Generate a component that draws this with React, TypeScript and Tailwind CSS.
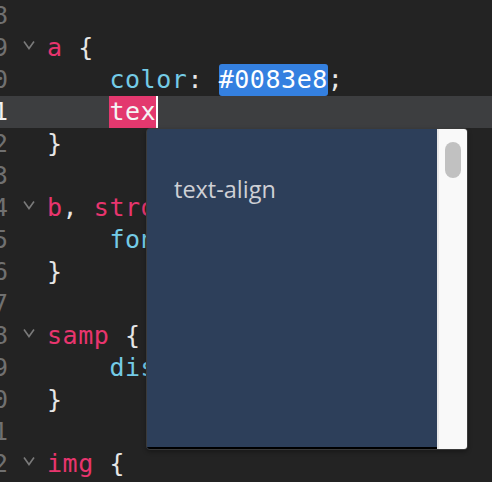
import React from "react";

type Tok = { t: string; c?: string };

const PINK = "text-[#e8356e]";
const CYAN = "text-[#74cbe6]";
const WHITE = "text-[#e6e6e6]";

const LINES: { n: number; fold?: boolean; indent?: boolean; toks: Tok[]; current?: boolean }[] = [
  { n: 18, toks: [] },
  { n: 19, fold: true, toks: [{ t: "a", c: PINK }, { t: " {", c: WHITE }] },
  { n: 20, indent: true, toks: [{ t: "color", c: CYAN }, { t: ": ", c: WHITE }] },
  { n: 21, indent: true, current: true, toks: [] },
  { n: 22, toks: [{ t: "}", c: WHITE }] },
  { n: 23, toks: [] },
  { n: 24, fold: true, toks: [{ t: "b", c: PINK }, { t: ", ", c: WHITE }, { t: "strong", c: PINK }, { t: " {", c: WHITE }] },
  { n: 25, indent: true, toks: [{ t: "font-weight", c: CYAN }, { t: ": bold;", c: WHITE }] },
  { n: 26, toks: [{ t: "}", c: WHITE }] },
  { n: 27, toks: [] },
  { n: 28, fold: true, toks: [{ t: "samp", c: PINK }, { t: " {", c: WHITE }] },
  { n: 29, indent: true, toks: [{ t: "display", c: CYAN }, { t: ": block;", c: WHITE }] },
  { n: 30, toks: [{ t: "}", c: WHITE }] },
  { n: 31, toks: [] },
  { n: 32, fold: true, toks: [{ t: "img", c: PINK }, { t: " {", c: WHITE }] },
];

function Chevron() {
  return (
    <svg width="12" height="10" viewBox="0 0 12 10" fill="none">
      <path d="M1 1.5 L6 8.5 L11 1.5" stroke="#7a7a7a" strokeWidth="1.6" />
    </svg>
  );
}

export default function App() {
  return (
    <div className="relative w-[492px] h-[482px] overflow-hidden bg-[#232323] font-['DejaVu_Sans_Mono',monospace] text-[25px] tracking-[0.55px]">
      <div className="flex flex-col">
        {LINES.map((line) => (
          <div
            key={line.n}
            className={`flex items-center h-[32px] ${line.current ? "bg-[#3d3e40]" : ""}`}
          >
            <div className="w-[8px] overflow-hidden flex justify-end shrink-0">
              <span className={`tracking-normal ${line.current ? "text-[#f2f2f2]" : "text-[#707070]"}`}>
                {line.n}
              </span>
            </div>
            <div className="w-[39px] shrink-0 flex justify-end pr-[12px] pb-[6px]">
              {line.fold && <Chevron />}
            </div>
            <div className="flex items-center whitespace-pre leading-[32px]">
              {line.indent && <span>{"    "}</span>}
              {line.toks.map((tk, i) => (
                <span key={i} className={tk.c}>
                  {tk.t}
                </span>
              ))}
              {line.n === 20 && (
                <>
                  <span className="bg-[#3480e0] text-white rounded-[3px] leading-[32px] h-[32px] flex items-center">#0083e8</span>
                  <span className={WHITE}>;</span>
                </>
              )}
              {line.current && (
                <>
                  <span className="bg-[#e3386e] text-[#f4f4f4] h-[32px] flex items-center">tex</span>
                  <span className="w-[2px] h-[32px] bg-white" />
                </>
              )}
            </div>
          </div>
        ))}
      </div>

      <div className="absolute left-[146px] top-[128px] w-[322px] h-[322px] flex rounded-[4px] border border-[#3a3a3a] bg-[#3a3a3a] overflow-hidden shadow-[0_2px_4px_rgba(0,0,0,0.3)]">
        <div className="flex-1 bg-[#2d3f5a] border-b-2 border-black pt-[45px] pl-[27px] font-['Open_Sans',sans-serif] tracking-normal">
          <div className="text-[23.5px] leading-[30px] text-[#cfd0d5]">text-align</div>
        </div>
        <div className="w-[30px] bg-[#f9f9f9] border-l-[2px] border-[#e8e8e8] pt-[13px] pl-[6px]">
          <div className="w-[16px] h-[36px] rounded-full bg-[#c1c1c1]" />
        </div>
      </div>
    </div>
  );
}
